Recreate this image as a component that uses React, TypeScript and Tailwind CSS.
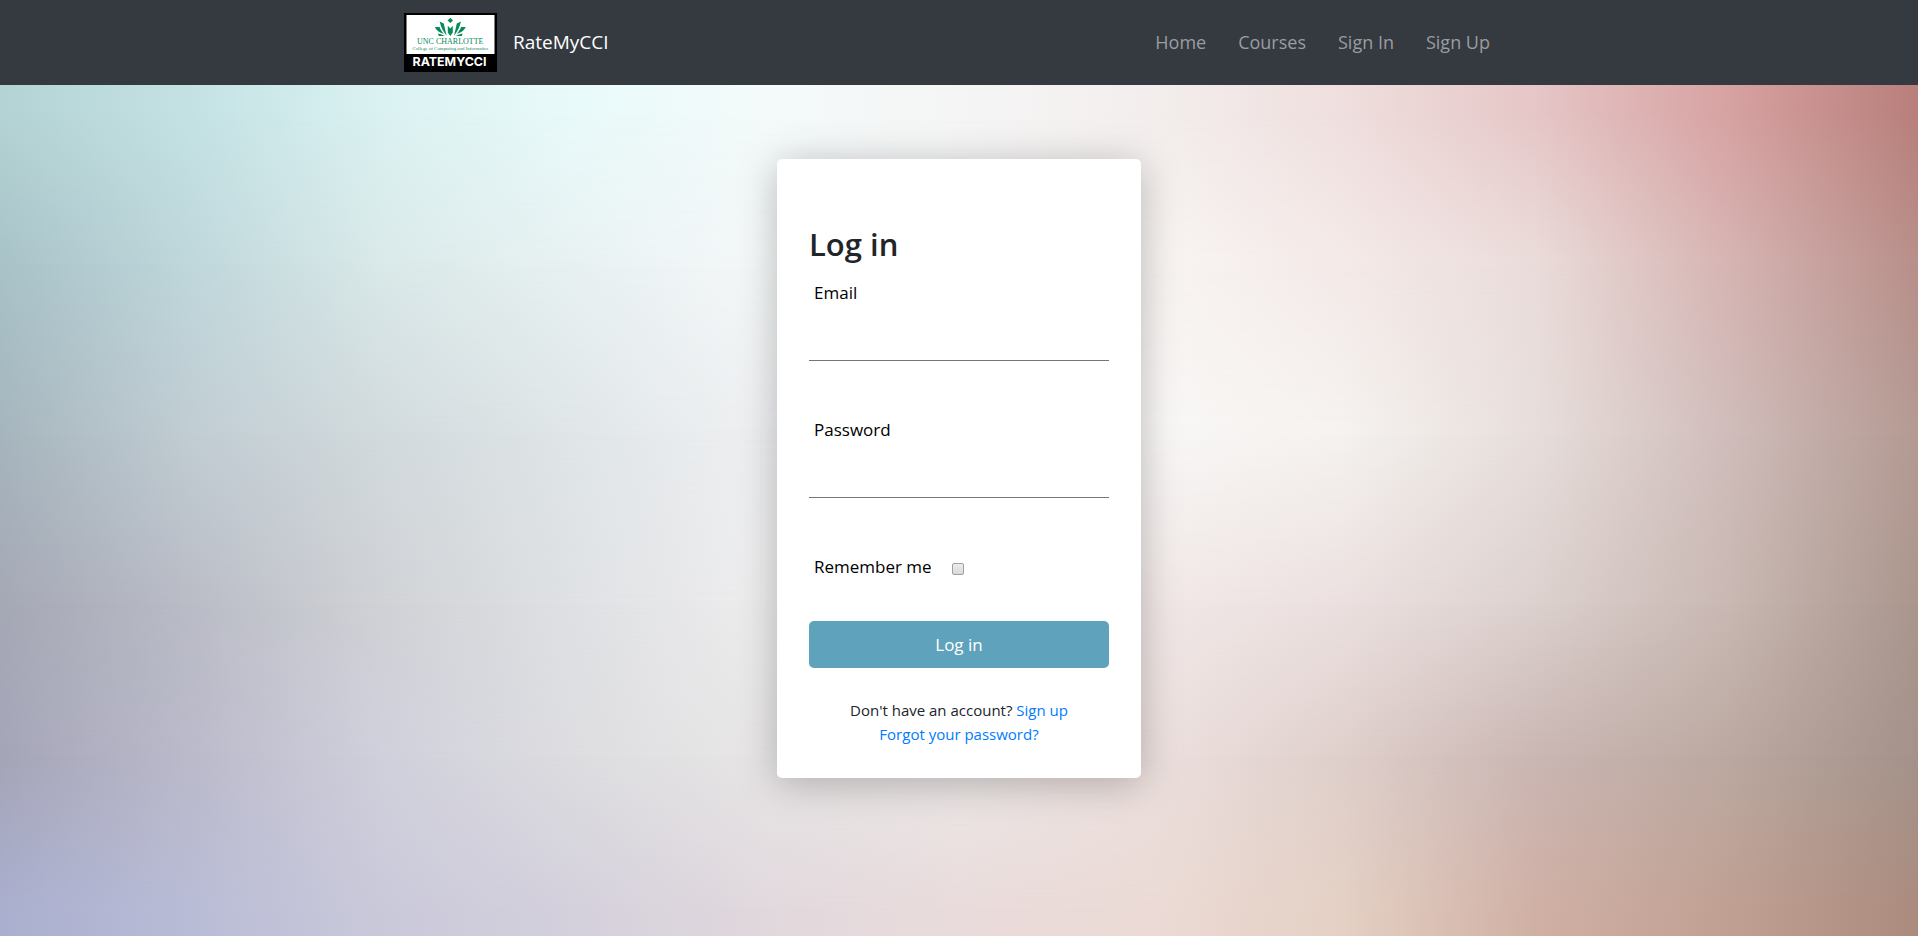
import React from "react";

const rows: { at: number; colors: string[] }[] = [
  { at: 3, colors: ["#b4d3d4", "#c4e2e4", "#dbf2f2", "#e9fafa", "#f4fafa", "#f5f5f5", "#f3eeed", "#efdfde", "#e6c6c7", "#d7a2a2", "#b87f7b"] },
  { at: 21, colors: ["#a8c2c8", "#bfd7db", "#dae9e9", "#e8f1f2", "#f5f8f9", "#fafafa", "#f8f4f2", "#f4eae8", "#eadcda", "#d6b5b3", "#b88f8a"] },
  { at: 41, colors: ["#a6b5bd", "#c1cdd3", "#d2dadd", "#e0e6e8", "#eff0f2", "#f8f8f8", "#f9f7f6", "#f5f2ef", "#e7dedb", "#d0bdbb", "#b49a93"] },
  { at: 61, colors: ["#a5a8b5", "#babcc6", "#d0d2d6", "#dfe1e4", "#eeedee", "#f2efef", "#f1e8e7", "#ebe0df", "#dcd1ce", "#c9b8b3", "#aa968d"] },
  { at: 79, colors: ["#a5a5b8", "#bbbacb", "#d0d0dc", "#dddde0", "#e8e6e6", "#ece8e7", "#ece0de", "#dfcfcb", "#cab6b3", "#bba9a1", "#a4928a"] },
  { at: 97, colors: ["#aaafcf", "#b9bcd6", "#cac9da", "#d4d0dc", "#e1d8dd", "#e9dbdb", "#ebdad5", "#e4d0c4", "#d0b0a5", "#c0a093", "#ab8b7e"] },
];

/* Each row of colours fades in over the one above it, giving a smooth colour mesh. */
function MeshBackground() {
  return (
    <div aria-hidden="true" className="absolute inset-0 -z-10">
      {rows.map((row, i) => {
        const mask = i === 0 ? undefined : `linear-gradient(to bottom, transparent ${rows[i - 1].at}%, black ${row.at}%)`;
        return (
          <div
            key={row.at}
            className="absolute inset-0"
            style={{ backgroundImage: `linear-gradient(to right, ${row.colors.join(", ")})`, maskImage: mask }}
          />
        );
      })}
    </div>
  );
}

function Logo() {
  return (
    <svg className="h-[59px] w-[93px]" viewBox="0 0 93 59" role="img" aria-label="UNC Charlotte RateMyCCI">
      <rect width="93" height="59" fill="#000" />
      <rect x="2.5" y="2" width="88" height="39" fill="#fff" />
      <g fill="#0a8a5a">
        <path d="M46.3 4.8 L49 7.4 L46.3 10 L43.6 7.4 Z" />
        <path d="M46.3 23 L43.8 19.5 L43.8 12.8 L46.3 15.5 L48.8 12.8 L48.8 19.5 Z" />
        <path d="M42.6 22.8 C39.6 19.5 36.8 14 35.6 8.6 L39.8 10.4 C40.6 14.5 41.8 18.5 42.6 22.8 Z" />
        <path d="M50 22.8 C53 19.5 55.8 14 57 8.6 L52.8 10.4 C52 14.5 50.8 18.5 50 22.8 Z" />
        <path d="M39.8 20.8 C35.5 19.6 32 17.2 31 14 L35.6 14 C36.4 16.6 38 18.8 39.8 20.8 Z" />
        <path d="M52.8 20.8 C57.1 19.6 60.6 17.2 61.6 14 L57 14 C56.2 16.6 54.6 18.8 52.8 20.8 Z" />
        <path d="M40.6 23 L34.8 23 L34 20.4 C36.6 20.8 38.8 21.6 40.6 23 Z" />
        <path d="M52 23 L57.8 23 L58.6 20.4 C56 20.8 53.8 21.6 52 23 Z" />
        <text x="46.3" y="30.5" textAnchor="middle" fontFamily="'Liberation Serif', serif" fontSize="8">UNC CHARLOTTE</text>
        <text x="46.3" y="36.6" textAnchor="middle" fontFamily="'Liberation Serif', serif" fontSize="4.9">College of Computing and Informatics</text>
      </g>
      <text x="45.5" y="53.3" textAnchor="middle" fontFamily="Inter, sans-serif" fontWeight="700" fontSize="12.4" fill="#fff">RATEMYCCI</text>
    </svg>
  );
}

const links = ["Home", "Courses", "Sign In", "Sign Up"];

function Field({ id, label, type }: { id: string; label: string; type: string }) {
  return (
    <div className="mb-[55px] flex flex-col">
      <label htmlFor={id} className="pl-[5px] text-[17px] leading-7 text-black">{label}</label>
      <input id={id} type={type} className="h-[54px] border-b border-[#767676] bg-transparent px-[5px] pt-5 outline-none" />
    </div>
  );
}

export default function App() {
  return (
    <div className="flex min-h-screen flex-col font-['Open_Sans',sans-serif] text-[#212529]">
      <header className="bg-[#343a40]">
        <div className="mx-auto flex min-h-[85px] max-w-[1140px] flex-wrap items-center justify-between px-[15px]">
          <a href="#home" className="flex items-center gap-4 text-[19px] text-white">
            <Logo />
            RateMyCCI
          </a>
          <nav className="flex pr-2 text-[18px] text-[#9a9da0]">
            {links.map((label) => (
              <a key={label} href="#nav" className="px-4">{label}</a>
            ))}
          </nav>
        </div>
      </header>
      <main className="relative isolate flex-1 px-4 pt-[74px] pb-16">
        <MeshBackground />
        <form className="mx-auto w-full max-w-[364px] rounded-[5px] bg-white px-8 pt-16 pb-8 shadow-[0_5px_40px_rgba(0,0,0,0.26)]">
          <h1 className="mb-[14px] text-[31px] leading-[42px] font-semibold">Log in</h1>
          <Field id="email" label="Email" type="email" />
          <Field id="password" label="Password" type="password" />
          <div className="mb-10 flex items-center gap-5 pl-[5px]">
            <label htmlFor="remember" className="text-[17px] leading-7 text-black">Remember me</label>
            <input id="remember" type="checkbox" className="mt-1 size-3 appearance-none rounded-xs border border-[#a0a0a0] bg-linear-to-b from-[#ececec] to-[#dadada] checked:bg-[#5fa2bc]" />
          </div>
          <button type="submit" className="h-[47px] w-full rounded-[5px] bg-[#5fa2bc] text-[17px] text-white">Log in</button>
          <p className="mt-[30px] text-center text-[15px] leading-6">
            Don't have an account? <a href="#signup" className="text-[#007bff]">Sign up</a>
            <br />
            <a href="#reset" className="text-[#007bff]">Forgot your password?</a>
          </p>
        </form>
      </main>
    </div>
  );
}
